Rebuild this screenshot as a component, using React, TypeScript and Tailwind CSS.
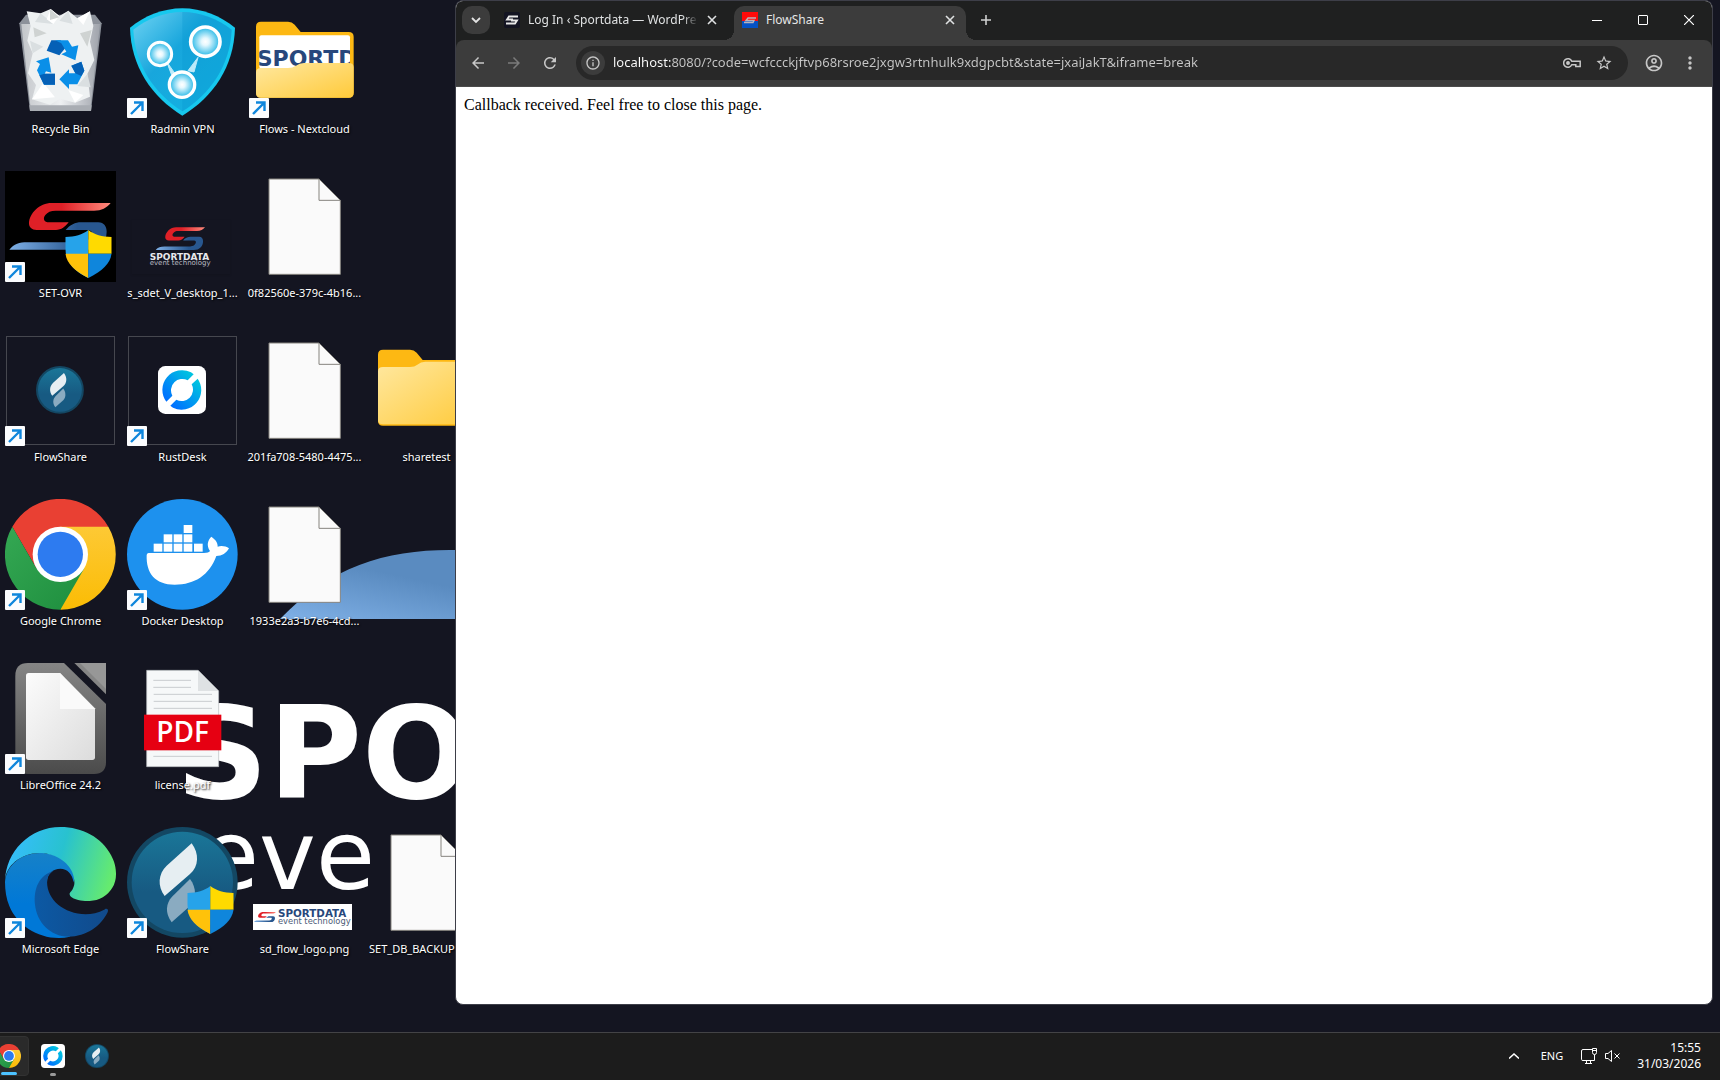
import type { ReactNode } from "react";
import {
  MdArrowBack,
  MdArrowForward,
  MdInfoOutline,
  MdMoreVert,
  MdOutlineAccountCircle,
  MdRefresh,
  MdStarBorder,
} from "react-icons/md";

type DesktopItem = {
  id: string;
  label: string;
  icon: ReactNode;
  shortcut?: boolean;
  shield?: boolean;
  fillLabel?: boolean;
};

function RecycleBinIcon() {
  return (
    <svg viewBox="15 21 333 333" className="size-full">
      <defs>
        <linearGradient id="bin" x1="0" x2="1" y1="0" y2="0">
          <stop offset="0" stopColor="#c3c6ca" />
          <stop offset=".5" stopColor="#eef0f2" />
          <stop offset="1" stopColor="#9fa3ab" />
        </linearGradient>
      </defs>
      <path d="M58 70 L78 44 H285 L305 70 L273 333 H90Z" fill="#8c919a" />
      <path d="M64 72 H300 L272 318 H91Z" fill="url(#bin)" />
      <path
        d="M80 34 L122 40 L152 27 L178 48 L205 32 L232 55 L270 34 L280 78 L270 125 L283 180 L262 222 L270 290 L225 308 L180 296 L150 314 L96 298 L108 255 L84 220 L98 160 L82 122 L92 78Z"
        fill="#eef1f2"
      />
      <path d="M122 40 L160 72 L105 66Z M205 32 L218 72 L178 62Z M98 160 L130 140 L90 122Z M262 222 L232 258 L272 262Z" fill="#dadfe1" />
      <path d="M152 27 L178 48 L160 72 L140 58Z M232 55 L270 34 L250 75Z M96 298 L130 248 L165 292Z M205 270 L250 285 L225 308Z" fill="#fff" />
      <path d="M150 27 L178 52 L150 60Z M240 100 L275 90 L262 140Z M100 82 L140 100 L104 112Z" fill="#cfd3d2" />
      <path d="M88 316 H275 L273 333 H90Z" fill="#a9adb3" />
      <path d="M154 121 H182 L196 144 L178 166 L140 152Z" fill="#0560b6" />
      <path d="M166 121 H204 L216 140 L235 136 L226 181 L184 163 L199 155 L184 130Z" fill="#0a8fe8" />
      <path d="M146 172 L154 218 L138 214 L134 221 H165 V254 H132 L111 211 L120 192 L108 184Z" fill="#0a8fe8" />
      <path d="M134 221 H165 V254 H132 L118 226Z" fill="#0560b6" />
      <path d="M214 197 L244 185 L253 212 L232 253 H207 V267 L178 238 L207 208 V220 H226Z" fill="#0a8fe8" />
      <path d="M214 197 L244 185 L253 212 L244 228 L226 220Z" fill="#0560b6" />
    </svg>
  );
}

function RadminIcon() {
  return (
    <svg viewBox="381 21 333 333" className="size-full">
      <defs>
        <linearGradient id="radmin" x1="0" x2="1" y1="0" y2="1">
          <stop offset="0" stopColor="#6fd3f3" />
          <stop offset=".4" stopColor="#18a6dc" />
          <stop offset="1" stopColor="#12b4e2" />
        </linearGradient>
        <radialGradient id="node">
          <stop offset="0" stopColor="#fff" />
          <stop offset=".25" stopColor="#e6f8fe" />
          <stop offset=".9" stopColor="#3cbfe9" />
        </radialGradient>
      </defs>
      <path d="M547 25C605 25 662 48 705 83C702 200 640 290 547 347C455 290 393 200 390 83C432 48 490 25 547 25Z" fill="#17c8ee" />
      <path d="M547 36C600 36 652 56 695 89C690 196 632 280 547 334C463 280 405 196 400 89C442 56 494 36 547 36Z" fill="url(#radmin)" />
      <path d="M547 36C600 36 652 56 695 89C690 196 632 280 547 334Z" fill="#0899d2" opacity=".35" />
      <path d="M500 185 L526 222 L516 228Z M594 172 L582 216 L564 212Z" fill="#bdeafa" stroke="#bdeafa" strokeWidth="3" />
      <g fill="url(#node)" stroke="#fff">
        <circle cx="480" cy="162" r="35" strokeWidth="9" />
        <circle cx="616" cy="125" r="44" strokeWidth="11" />
        <circle cx="546" cy="254" r="38" strokeWidth="10" />
      </g>
    </svg>
  );
}

function FolderIcon({ preview = false }: { preview?: boolean }) {
  return (
    <svg viewBox="747 21 333 333" className="size-full">
      <defs>
        <linearGradient id="folder" x1="0" x2="1" y1="0" y2="1">
          <stop offset="0" stopColor="#ffe8a0" />
          <stop offset="1" stopColor="#ffca3a" />
        </linearGradient>
        <clipPath id="sheet">
          <rect x="778" y="106" width="272" height="100" />
        </clipPath>
      </defs>
      <path d="M768 80Q768 65 783 65H864Q876 65 884 74L902 96H1046Q1061 96 1061 111V278Q1061 293 1046 293H783Q768 293 768 278Z" fill="#fdb813" />
      {preview ? (
        <>
          <rect x="778" y="106" width="272" height="100" rx="6" fill="#fff" />
          <g clipPath="url(#sheet)">
            <text x="770" y="198" fontFamily="DejaVu Sans" fontWeight="700" fontSize="66" fill="#27477c">
              SPORTD
            </text>
          </g>
          <path d="M768 218Q768 204 783 204H864Q878 204 888 197Q898 189 912 189H1046Q1061 189 1061 202V278Q1061 293 1046 293H783Q768 293 768 278Z" fill="url(#folder)" />
        </>
      ) : (
        <path d="M768 130Q768 117 783 117H864Q878 117 886 110Q896 101 910 101H1046Q1061 101 1061 115V276Q1061 289 1046 289H783Q768 289 768 276Z" fill="url(#folder)" />
      )}
    </svg>
  );
}

function FileIcon() {
  return (
    <svg viewBox="747 513 333 333" className="size-full">
      <path d="M807 537H957L1021 601V823H807Z" fill="#fafafa" stroke="#86847f" strokeWidth="3" />
      <path d="M957 537V601H1021" fill="none" stroke="#86847f" strokeWidth="3" />
    </svg>
  );
}

function SportdataMark(props: { x?: number; y?: number; width?: number; height?: number; className?: string }) {
  return (
    <svg viewBox="26 606 308 146" {...props}>
      <defs>
        <linearGradient id="markRed" x1="0" x2="1">
          <stop offset=".4" stopColor="#df2027" />
          <stop offset="1" stopColor="#ff8a7c" />
        </linearGradient>
        <linearGradient id="markBlue" x1="0" x2="1">
          <stop offset="0" stopColor="#7fb0e6" />
          <stop offset=".7" stopColor="#28578f" />
        </linearGradient>
      </defs>
      <path d="M332 609H155C118 609 88 640 87 670C87 682 95 690 110 690H168C184 690 196 680 206 667H148C131 667 128 655 136 645C143 636 152 632 167 632H282C305 632 320 624 332 609Z" fill="url(#markRed)" />
      <path d="M197 690C210 675 226 667 243 667H295C312 667 320 680 320 695C320 727 298 749 262 749H28C42 732 58 727 82 727H240C260 727 275 716 276 700C276 692 268 690 258 690Z" fill="url(#markBlue)" />
    </svg>
  );
}

function SetOvrIcon() {
  return (
    <svg viewBox="15 513 333 333" className="size-full bg-black">
      <SportdataMark x={26} y={606} width={308} height={146} />
    </svg>
  );
}

function DesktopImageIcon() {
  return (
    <svg viewBox="381 513 333 333" className="size-full">
      <rect x="396" y="660" width="294" height="162" fill="#141521" className="drop-shadow-md" />
      <SportdataMark x={466} y={680} width={150} height={72} />
      <text x="449" y="780" fontFamily="DejaVu Sans" fontWeight="700" fontSize="27" fill="#e8e8ec">
        SPORTDATA
      </text>
      <text x="449" y="794" fontFamily="DejaVu Sans" fontSize="21" fill="#b9bac2">
        event technology
      </text>
    </svg>
  );
}

function FlowShareLogo() {
  return (
    <svg viewBox="381 561 333 333" className="size-full">
      <defs>
        <linearGradient id="flow" x1="0" x2="0" y1="0" y2="1">
          <stop offset="0" stopColor="#1a7698" />
          <stop offset=".6" stopColor="#175a82" />
        </linearGradient>
      </defs>
      <circle cx="547" cy="727" r="166" fill="#134763" />
      <circle cx="547" cy="727" r="152" fill="url(#flow)" />
      <path d="M575 610C598 640 597 680 570 702L494 768C472 738 474 702 500 677Z" fill="#e6eef2" />
      <path d="M570 717C590 742 590 780 570 798L515 847C494 818 498 790 516 770Z" fill="#8aabc1" />
    </svg>
  );
}

function RustDeskLogo() {
  return (
    <svg viewBox="474 138 144 144" className="size-full">
      <defs>
        <linearGradient id="rust" x1="0" x2="1" y1="1" y2="0">
          <stop offset=".1" stopColor="#0071ff" />
          <stop offset=".9" stopColor="#00c3e0" />
        </linearGradient>
      </defs>
      <rect x="474" y="138" width="144" height="144" rx="22" fill="#fff" />
      <path d="M499 245A59 59 0 0 1 573 157L581 163L563 181A34 34 0 0 0 517 227Z" fill="url(#rust)" />
      <path d="M593 176A59 59 0 0 1 519 263L511 257L529 239A34 34 0 0 0 575 193Z" fill="url(#rust)" />
    </svg>
  );
}

function SmallIconFrame({ children }: { children: ReactNode }) {
  return (
    <div className="flex size-full p-px">
      <div className="flex flex-1 items-center justify-center border border-[#46474f] pr-px pb-px">
        <div className="size-12">{children}</div>
      </div>
    </div>
  );
}

function ChromeLogo() {
  return (
    <svg viewBox="15 537 333 333" className="size-full">
      <defs>
        <linearGradient id="cYellow" x1="0" x2="0" y1="0" y2="1">
          <stop offset="0" stopColor="#fdc935" />
          <stop offset="1" stopColor="#fbbc04" />
        </linearGradient>
        <linearGradient id="cGreen" x1="0" x2="1" y1="0" y2="1">
          <stop offset="0" stopColor="#34a853" />
          <stop offset="1" stopColor="#1e8e3e" />
        </linearGradient>
      </defs>
      <path d="M37 620A166 166 0 0 1 325 620L181 640L109 745Z" fill="#e94033" />
      <path d="M181 620H325A166 166 0 0 1 181 869L220 745Z" fill="url(#cYellow)" />
      <path d="M37 620L109 745L181 745L253 745L181 869A166 166 0 0 1 37 620Z" fill="url(#cGreen)" />
      <circle cx="181" cy="703" r="83" fill="#fff" />
      <circle cx="181" cy="703" r="68" fill="#2d7bf0" />
    </svg>
  );
}

function DockerIcon() {
  const boxes = [
    [551, 615],
    [491, 643],
    [521, 643],
    [551, 643],
    [461, 671],
    [491, 671],
    [521, 671],
    [551, 671],
    [582, 671],
  ];
  return (
    <svg viewBox="381 537 333 333" className="size-full">
      <circle cx="547" cy="703" r="166" fill="#1d91ee" />
      <g fill="#fff">
        {boxes.map(([x, y]) => (
          <rect key={`${x}-${y}`} x={x} y={y} width="26" height="24" />
        ))}
        <path d="M446 699H612C622 699 628 696 630 693C618 675 624 660 634 650C648 660 653 668 653 680C665 676 678 679 687 685C679 700 666 708 649 708C628 765 585 794 524 794C465 794 438 760 440 705Q441 699 446 699Z" />
      </g>
    </svg>
  );
}

function LibreOfficeIcon() {
  return (
    <svg viewBox="15 69 333 333" className="size-full">
      <defs>
        <linearGradient id="loFrame" x1="0" x2="0" y1="0" y2="1">
          <stop offset="0" stopColor="#858585" />
          <stop offset="1" stopColor="#4b4b4b" />
        </linearGradient>
        <linearGradient id="loSheet" x1="0" x2="1" y1="0" y2="1">
          <stop offset="0" stopColor="#fcfcfc" />
          <stop offset="1" stopColor="#dcdcdc" />
        </linearGradient>
      </defs>
      <path d="M84 69H192L318 192V366Q318 402 282 402H84Q46 402 46 366V107Q46 69 84 69Z" fill="url(#loFrame)" />
      <path d="M223 69H318V163Z" fill="#858585" />
      <path d="M240 69H318V147Z" fill="#979797" />
      <path d="M86 99H180L285 205V352Q285 360 277 360H86Q78 360 78 352V107Q78 99 86 99Z" fill="url(#loSheet)" />
      <path d="M180 99L285 207H180Z" fill="#fafafa" />
    </svg>
  );
}

function PdfIcon() {
  return (
    <svg viewBox="381 69 333 333" className="size-full">
      <path d="M440 91H594L656 153V380H440Z" fill="#f6f8f9" stroke="#b5b9bc" strokeWidth="2" />
      <path d="M594 91L656 153H594Z" fill="#dfe2e4" />
      <path d="M460 121H573M460 142H573M461 163H636M461 184H636M461 205H636M460 349H636" stroke="#c8cccf" strokeWidth="3" />
      <rect x="432" y="224" width="232" height="107" fill="#e60012" />
      <text x="548" y="306" textAnchor="middle" fontFamily="Open Sans" fontWeight="600" fontSize="84" fill="#fff">
        PDF
      </text>
    </svg>
  );
}

function EdgeIcon() {
  return (
    <svg viewBox="0 0 256 256" className="size-full">
      <defs>
        <linearGradient id="eMid" x1="0" x2="0" y1="0" y2="1">
          <stop offset="0" stopColor="#1681c8" />
          <stop offset=".6" stopColor="#0078d7" />
        </linearGradient>
        <linearGradient id="eTop" x1="0" x2="1" y1=".3" y2=".5">
          <stop offset="0" stopColor="#37bdff" />
          <stop offset=".5" stopColor="#28c2cf" />
          <stop offset="1" stopColor="#66eb6e" />
        </linearGradient>
        <linearGradient id="eDark" x1="0" x2="1" y1="0" y2="0">
          <stop offset="0" stopColor="#0c59a4" />
          <stop offset="1" stopColor="#114a8b" />
        </linearGradient>
      </defs>
      <path
        d="M150 253C90 266 30 232 10 182C3 166 0 146 0 126C4 86 40 60 80 60C125 60 150 82 158 106C160 114 160 122 158 128C156 108 143 96 128 96C110 96 97 108 97 127L80 190Z"
        fill="url(#eMid)"
      />
      <path
        d="M112 101C78 112 66 142 69 178C73 220 105 252 146 253C188 252 220 230 237 196C239 190 235 187 230 190C215 198 200 201 186 201C136 201 97 168 97 127C97 115 103 106 112 101Z"
        fill="url(#eDark)"
      />
      <path
        d="M152.300 148.900c-.8 1-3.300 2.500-3.300 5.700 0 2.600 1.700 5.100 4.700 7.200 14.400 10 41.500 8.700 41.600 8.700 10.700 0 21.100-2.900 30.300-8.300a61.400 61.400 0 0 0 30.400-52.900c.3-22.400-8-37.300-11.300-43.900C223.500 23.900 177.700 0 128 0 57.900 0 1 56.200 0 126.200.5 89.700 36.800 60.200 80 60.200c3.500 0 23.500.3 42 10.100 16.300 8.600 24.900 18.900 30.800 29.200 6.200 10.700 7.300 24.100 7.300 29.500 0 5.300-2.700 13.300-7.800 19.900z"
        fill="url(#eTop)"
      />
    </svg>
  );
}

function FlowLogoPng() {
  return (
    <svg viewBox="747 561 333 333" className="size-full">
      <rect x="759" y="792" width="297" height="78" fill="#fff" />
      <SportdataMark x={761} y={812} width={67} height={38} />
      <text x="834" y="831" fontFamily="DejaVu Sans" fontWeight="700" fontSize="31" fill="#27477c">
        SPORTDATA
      </text>
      <text x="834" y="851" fontFamily="DejaVu Sans" fontSize="25" fill="#4d5c78">
        event technology
      </text>
    </svg>
  );
}

function AdminShield() {
  return (
    <svg viewBox="561 738 141 145" className="absolute right-1 bottom-1 h-12 w-[47px]">
      <path d="M631 738C613 752 590 759 562 759V795C562 835 590 864 631 883Z" fill="#26a3ea" />
      <path d="M631 738C650 752 672 759 701 759V810H631Z" fill="#ffda00" />
      <path d="M562 810H631V883C588 862 566 838 562 810Z" fill="#ffc20a" />
      <path d="M631 810H701C697 838 675 862 631 883Z" fill="#0f86dc" />
    </svg>
  );
}

function ShortcutBadge() {
  return (
    <svg viewBox="0 0 20 20" className="absolute bottom-0 left-0 size-5">
      <rect width="20" height="20" rx="1" fill="#fbfcfe" />
      <path d="M4 16L16 4M7 4.500H15.500V13" fill="none" stroke="#0f86dc" strokeWidth="2.400" />
    </svg>
  );
}

// listed column by column, six rows each; null leaves the slot empty
const ITEMS: (DesktopItem | null)[] = [
  { id: "bin", label: "Recycle Bin", icon: <RecycleBinIcon /> },
  { id: "set-ovr", label: "SET-OVR", icon: <SetOvrIcon />, shortcut: true, shield: true },
  { id: "flow-small", label: "FlowShare", icon: <SmallIconFrame><FlowShareLogo /></SmallIconFrame>, shortcut: true },
  { id: "chrome", label: "Google Chrome", icon: <ChromeLogo />, shortcut: true },
  { id: "libre", label: "LibreOffice 24.2", icon: <LibreOfficeIcon />, shortcut: true },
  { id: "edge", label: "Microsoft Edge", icon: <EdgeIcon />, shortcut: true },
  { id: "radmin", label: "Radmin VPN", icon: <RadminIcon />, shortcut: true },
  { id: "wallpaper", label: "s_sdet_V_desktop_1...", icon: <DesktopImageIcon /> },
  { id: "rustdesk", label: "RustDesk", icon: <SmallIconFrame><RustDeskLogo /></SmallIconFrame>, shortcut: true },
  { id: "docker", label: "Docker Desktop", icon: <DockerIcon />, shortcut: true },
  { id: "license", label: "license.pdf", icon: <PdfIcon /> },
  { id: "flow", label: "FlowShare", icon: <FlowShareLogo />, shortcut: true, shield: true },
  { id: "flows", label: "Flows - Nextcloud", icon: <FolderIcon preview />, shortcut: true },
  { id: "0f82", label: "0f82560e-379c-4b16...", icon: <FileIcon /> },
  { id: "201f", label: "201fa708-5480-4475...", icon: <FileIcon /> },
  { id: "1933", label: "1933e2a3-b7e6-4cd...", icon: <FileIcon /> },
  null,
  { id: "logo", label: "sd_flow_logo.png", icon: <FlowLogoPng /> },
  null,
  null,
  { id: "sharetest", label: "sharetest", icon: <FolderIcon /> },
  null,
  null,
  { id: "backup", label: "SET_DB_BACKUP", icon: <FileIcon />, fillLabel: true },
];

function DesktopTile({ item }: { item: DesktopItem }) {
  return (
    <button type="button" className="flex flex-col items-center pt-[7px]">
      <span className="relative block size-[111px]">
        {item.icon}
        {item.shield ? <AdminShield /> : null}
        {item.shortcut ? <ShortcutBadge /> : null}
      </span>
      <span
        className={`mt-[3px] text-[11px] leading-4 whitespace-nowrap text-white [text-shadow:1px_1px_2px_#000] ${
          item.fillLabel ? "w-[115px] text-left" : ""
        }`}
      >
        {item.label}
      </span>
    </button>
  );
}

function Wallpaper() {
  return (
    <div className="absolute inset-0 overflow-hidden text-white select-none">
      <svg viewBox="0 0 700 700" className="absolute top-0 left-0 size-[700px]">
        <defs>
          <linearGradient id="wave" x1="0" x2="1" y1="1" y2="0">
            <stop offset="0" stopColor="#7fb0e6" />
            <stop offset=".5" stopColor="#5a8bc0" />
          </linearGradient>
        </defs>
        <path d="M280 619C330 567 385 550 450 550H600V619Z" fill="url(#wave)" />
      </svg>
      <div className="absolute top-[690px] left-[176px] font-['DejaVu_Sans'] text-[128px] leading-32 font-bold whitespace-nowrap">
        SPO
      </div>
      <div className="absolute top-[800px] left-[200px] font-['DejaVu_Sans'] text-[96px] leading-28 whitespace-nowrap">
        eve
      </div>
    </div>
  );
}

function CloseIcon() {
  return (
    <svg viewBox="0 0 10 10" className="size-[10px]">
      <path d="M1 1L9 9M9 1L1 9" stroke="currentColor" strokeWidth="1.600" />
    </svg>
  );
}

function TabStrip() {
  return (
    <div className="flex h-[39px] items-start bg-[#1f2020] text-xs text-[#dfe1e2]">
      <button type="button" aria-label="Search tabs" className="mt-[5px] ml-1.5 flex size-7 items-center justify-center rounded-[10px] bg-[#3c3c3c]">
        <svg viewBox="0 0 10 10" className="size-[10px]">
          <path d="M1 3L5 7L9 3" fill="none" stroke="#e3e3e3" strokeWidth="1.800" />
        </svg>
      </button>
      <div className="mt-[5px] flex h-[28px] w-[244px] items-center pr-[17px] pl-[14px]">
        <svg viewBox="0 0 16 16" className="size-4 shrink-0">
          <rect width="16" height="16" rx="2" fill="#131422" />
          <path d="M14 4.500H5L3 7.500H9M2 11.500H11L13 8.500H7" fill="none" stroke="#e8e8e8" strokeWidth="1.800" />
        </svg>
        <span className="ml-2 flex-1 overflow-hidden whitespace-nowrap [mask-image:linear-gradient(90deg,#000_155px,transparent_170px)]">
          Log In ‹ Sportdata — WordPress
        </span>
        <button type="button" aria-label="Close Log In tab" className="ml-2.5">
          <CloseIcon />
        </button>
      </div>
      <div className="relative mt-[5px] flex h-[34px] w-[232px] items-start rounded-t-[10px] bg-[#3c3c3c] pt-1.5 pr-[11px] pl-2">
        <span className="absolute bottom-0 -left-2.5 size-2.5 bg-[radial-gradient(circle_at_0_0,transparent_10px,#3c3c3c_10px)]" />
        <span className="absolute -right-2.5 bottom-0 size-2.5 bg-[radial-gradient(circle_at_100%_0,transparent_10px,#3c3c3c_10px)]" />
        <svg viewBox="0 0 16 16" className="size-4 shrink-0">
          <path d="M0 0H16V9H0Z" fill="#ff0a0a" />
          <path d="M0 9H16V16H0Z" fill="#0552c4" />
          <path d="M14 6H6L4 8.500H12L11 10.500H2" fill="none" stroke="#b9b4bd" strokeWidth="1.400" />
        </svg>
        <span className="ml-2 flex-1 leading-4 text-[#e6e6e6]">FlowShare</span>
        <button type="button" aria-label="Close FlowShare tab" className="mt-[3px]">
          <CloseIcon />
        </button>
      </div>
      <button type="button" aria-label="New tab" className="mt-[5px] ml-1.5 flex size-7 items-center justify-center">
        <svg viewBox="0 0 12 12" className="size-3">
          <path d="M6 1V11M1 6H11" stroke="#cfd0d0" strokeWidth="1.600" />
        </svg>
      </button>
      <div className="ml-auto flex text-white">
        <button type="button" aria-label="Minimise" className="flex h-[38px] w-[46px] items-center justify-center">
          <svg viewBox="0 0 10 10" className="size-[10px]">
            <path d="M0 5.500H10" stroke="currentColor" />
          </svg>
        </button>
        <button type="button" aria-label="Maximise" className="flex h-[38px] w-[46px] items-center justify-center">
          <svg viewBox="0 0 10 10" className="size-[10px]">
            <rect x=".5" y=".5" width="9" height="9" rx=".5" fill="none" stroke="currentColor" />
          </svg>
        </button>
        <button type="button" aria-label="Close window" className="flex h-[38px] w-[46px] items-center justify-center">
          <svg viewBox="0 0 10 10" className="size-[10px]">
            <path d="M0 0L10 10M10 0L0 10" stroke="currentColor" strokeWidth="1.200" />
          </svg>
        </button>
      </div>
    </div>
  );
}

function Toolbar() {
  return (
    <div className="bg-[#1f2020]">
      <div className="flex h-[47px] items-center rounded-t-lg border-b border-[#4b4b4b] bg-[#3c3c3c] px-1 text-[#c7c7c7]">
        <button type="button" aria-label="Back" className="flex w-9 justify-center">
          <MdArrowBack size={18} />
        </button>
        <button type="button" aria-label="Forward" className="flex w-9 justify-center text-[#7b7b7b]">
          <MdArrowForward size={18} />
        </button>
        <button type="button" aria-label="Reload" className="flex w-9 justify-center">
          <MdRefresh size={18} />
        </button>
        <div className="mx-2 flex h-[34px] flex-1 items-center rounded-full bg-[#282828] pr-2 pl-[5px]">
          <button type="button" aria-label="View site information" className="flex size-6 items-center justify-center rounded-full bg-[#3c3c3c]">
            <MdInfoOutline size={16} />
          </button>
          <input
            aria-label="Address"
            type="text"
            defaultValue="localhost:8080/?code=wcfccckjftvp68rsroe2jxgw3rtnhulk9xdgpcbt&state=jxaiJakT&iframe=break"
            className="ml-2 min-w-0 flex-1 bg-[linear-gradient(90deg,#ffffff_58px,#c7c7c7_58px)] bg-clip-text text-[13px] text-transparent outline-none"
          />
          <button type="button" aria-label="Passwords" className="flex w-8 justify-center">
            <svg viewBox="0 0 18 12" className="h-3 w-[18px]" fill="none" stroke="currentColor" strokeWidth="1.500">
              <path d="M8.800 4.200H17.200V9.500H12.800V7.800H8.800A4.300 4.300 0 1 1 8.800 4.200Z" />
              <circle cx="5" cy="6" r="1.200" fill="currentColor" />
            </svg>
          </button>
          <button type="button" aria-label="Bookmark this tab" className="flex w-8 justify-center">
            <MdStarBorder size={18} />
          </button>
        </div>
        <button type="button" aria-label="Profile" className="flex w-9 justify-center">
          <MdOutlineAccountCircle size={20} />
        </button>
        <button type="button" aria-label="Menu" className="flex w-9 justify-center">
          <MdMoreVert size={20} />
        </button>
      </div>
    </div>
  );
}

function BrowserWindow() {
  return (
    <section className="absolute top-0 right-[7px] bottom-[27px] left-[455px] flex flex-col overflow-hidden rounded-lg border border-[#3d3e48] bg-white">
      <TabStrip />
      <Toolbar />
      <main className="flex-1 p-2 font-['Liberation_Serif',serif] text-base leading-5 text-black">
        Callback received. Feel free to close this page.
      </main>
    </section>
  );
}

function TaskbarApp({ label, active = false, dot = false, children }: { label: string; active?: boolean; dot?: boolean; children: ReactNode }) {
  return (
    <button
      type="button"
      aria-label={label}
      className={`relative flex size-10 items-center justify-center rounded ${active ? "border border-[#323232] bg-[#2a2a2a]" : ""}`}
    >
      <span className="size-6">{children}</span>
      {active ? <span className="absolute bottom-0 h-[3px] w-4 rounded-full bg-[#4cc2ff]" /> : null}
      {dot ? <span className="absolute bottom-0 h-[3px] w-1.5 rounded-full bg-[#9a9a9a]" /> : null}
    </button>
  );
}

function Taskbar() {
  return (
    <footer className="flex h-12 items-center justify-between overflow-hidden border-t border-[#434346] bg-[#1c1c1c] pb-px text-xs text-white">
      <nav className="-ml-[11px] flex gap-1">
        <TaskbarApp label="Google Chrome" active>
          <ChromeLogo />
        </TaskbarApp>
        <TaskbarApp label="RustDesk" dot>
          <RustDeskLogo />
        </TaskbarApp>
        <TaskbarApp label="FlowShare">
          <FlowShareLogo />
        </TaskbarApp>
      </nav>
      <div className="flex items-center pr-[19px]">
        <button type="button" aria-label="Show hidden icons" className="mr-[22px]">
          <svg viewBox="0 0 10 6" className="h-1.5 w-[10px]">
            <path d="M0 5.500L5 1L10 5.500" fill="none" stroke="currentColor" strokeWidth="1.500" />
          </svg>
        </button>
        <button type="button" className="text-[11px]">
          ENG
        </button>
        <button type="button" aria-label="Network and volume" className="mr-4 ml-[18px] flex items-center gap-2">
          <svg viewBox="0 0 16 16" className="size-4" fill="none" stroke="currentColor">
            <path d="M11 1.500H2Q.5 1.500 .5 3V11.500Q.5 12.500 2 12.500H13.500V6.500M4 15.500H11M5.500 12.500V15M9.500 12.500V15M11.500 .5H15.500V4.500Q15.500 6.500 13.500 6.500Q11.500 6.500 11.500 4.500ZM11.500 2.500H15.500" />
          </svg>
          <svg viewBox="0 0 16 14" className="h-[14px] w-4" fill="none" stroke="currentColor">
            <path d="M.5 4.500H3L6.500 1.500V12.500L3 9.500H.5ZM9.500 4.500L14.500 9.500M14.500 4.500L9.500 9.500" />
          </svg>
        </button>
        <time dateTime="2026-03-31T15:55" className="flex flex-col items-end leading-4">
          <span>15:55</span>
          <span>31/03/2026</span>
        </time>
      </div>
    </footer>
  );
}

export default function App() {
  return (
    <div className="flex min-h-screen flex-col bg-[#141521] font-['Noto_Sans',sans-serif]">
      <div className="relative flex-1 overflow-hidden">
        <Wallpaper />
        <div className="relative grid grid-flow-col auto-cols-[121px] grid-rows-[repeat(6,164px)] gap-x-px">
          {ITEMS.map((item, i) => (item ? <DesktopTile key={item.id} item={item} /> : <span key={i} />))}
        </div>
        <BrowserWindow />
      </div>
      <Taskbar />
    </div>
  );
}
